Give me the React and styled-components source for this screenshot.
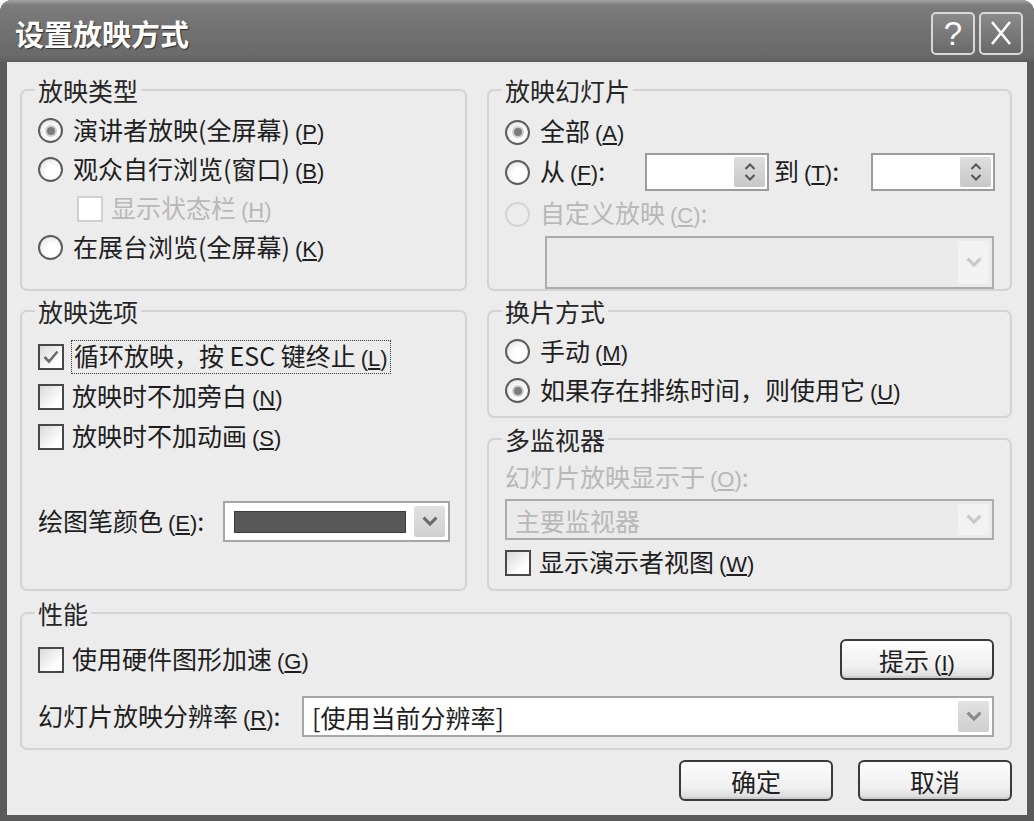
import React from 'react'
import styled, { createGlobalStyle } from 'styled-components'

const GlobalStyle = createGlobalStyle`
  html, body {
    margin: 0;
    padding: 0;
    background: #fff;
  }
  body {
    font-family: "Noto Sans CJK SC", "Noto Sans", sans-serif;
  }
  * {
    box-sizing: border-box;
  }
`

function Chevron({ color = '#666', w = 16 }) {
  return (
    <svg width={w} height={w * 0.65} viewBox="0 0 10 6.5">
      <path d="M1 1 L5 5 L9 1" fill="none" stroke={color} strokeWidth="1.9" />
    </svg>
  )
}

function SpinGlyph({ up }) {
  return (
    <svg width="12" height="7" viewBox="0 0 12 7">
      <path d={up ? 'M1.5 6 L6 1.5 L10.5 6' : 'M1.5 1 L6 5.5 L10.5 1'} fill="none" stroke="#555" strokeWidth="2" />
    </svg>
  )
}

function Tick() {
  return (
    <svg width="18" height="16" viewBox="0 0 18 16">
      <path d="M2.5 8 L7 12.5 L15.5 2.5" fill="none" stroke="#6c6c6c" strokeWidth="2.6" />
    </svg>
  )
}

const Key = ({ k }) => (
  <KeyText>
    (<u>{k}</u>)
  </KeyText>
)

function Spin() {
  return (
    <SpinBox>
      <SpinArrows>
        <SpinGlyph up />
        <SpinGlyph />
      </SpinArrows>
    </SpinBox>
  )
}

export default function App() {
  return (
    <>
      <GlobalStyle />
      <Window>
        <TitleBar>
          <Title>设置放映方式</Title>
          <TitleButton>?</TitleButton>
          <TitleButton>
            <svg width="24" height="26" viewBox="0 0 24 26">
              <path d="M3 2 L21 24 M21 2 L3 24" stroke="#fff" strokeWidth="2.6" />
            </svg>
          </TitleButton>
        </TitleBar>

        <Frame>
          <TopGrid>
            <Group $h={214} $pt={8}>
              <Legend>放映类型</Legend>
              <Row>
                <Radio $checked />
                <Label>演讲者放映(全屏幕)<Key k="P" /></Label>
              </Row>
              <Row>
                <Radio />
                <Label>观众自行浏览(窗口)<Key k="B" /></Label>
              </Row>
              <Row $indent={39}>
                <Check $disabled />
                <Label $disabled>显示状态栏<Key k="H" /></Label>
              </Row>
              <Row>
                <Radio />
                <Label>在展台浏览(全屏幕)<Key k="K" /></Label>
              </Row>
            </Group>

            <Group $h={214} $pt={9}>
              <Legend>放映幻灯片</Legend>
              <Row $h={40}>
                <Radio $checked />
                <Label>全部<Key k="A" /></Label>
              </Row>
              <Row $h={40}>
                <Radio />
                <Label $w={105}>从<Key k="F" />:</Label>
                <Spin />
                <Label $w={97} $ml={5}>到<Key k="T" />:</Label>
                <Spin />
              </Row>
              <Row $h={44}>
                <Radio $disabled />
                <Label $disabled>自定义放映<Key k="C" />:</Label>
              </Row>
              <Select $disabled $ml={40}>
                <SelectValue />
                <ArrowButton $disabled>
                  <Chevron color="#c8c8c8" />
                </ArrowButton>
              </Select>
            </Group>

            <Group $h={293} $pt={13}>
              <Legend>放映选项</Legend>
              <Row $h={40}>
                <Check $checked>
                  <Tick />
                </Check>
                <Label $focus>循环放映，按 ESC 键终止<Key k="L" /></Label>
              </Row>
              <Row $h={40}>
                <Check />
                <Label>放映时不加旁白<Key k="N" /></Label>
              </Row>
              <Row $h={40}>
                <Check />
                <Label>放映时不加动画<Key k="S" /></Label>
              </Row>
              <Row $h={41} $mt={44}>
                <Label $w={185}>绘图笔颜色<Key k="E" />:</Label>
                <Select $w={227}>
                  <Swatch />
                  <ArrowButton>
                    <Chevron color="#6a6a6a" />
                  </ArrowButton>
                </Select>
              </Row>
            </Group>

            <Stack>
              <Group $h={120} $pt={8}>
                <Legend>换片方式</Legend>
                <Row>
                  <Radio />
                  <Label>手动<Key k="M" /></Label>
                </Row>
                <Row>
                  <Radio $checked />
                  <Label>如果存在排练时间，则使用它<Key k="U" /></Label>
                </Row>
              </Group>
              <Group $h={165} $pt={12}>
                <Legend>多监视器</Legend>
                <Row $h={28}>
                  <Label $disabled>幻灯片放映显示于<Key k="O" />:</Label>
                </Row>
                <Select $disabled $mt={7}>
                  <SelectValue $disabled>主要监视器</SelectValue>
                  <ArrowButton $disabled>
                    <Chevron color="#c8c8c8" />
                  </ArrowButton>
                </Select>
                <Row $h={46}>
                  <Check />
                  <Label>显示演示者视图<Key k="W" /></Label>
                </Row>
              </Group>
            </Stack>
          </TopGrid>

          <Group $h={150} $pt={13} $mt={9}>
            <Legend>性能</Legend>
            <Row $h={41} $between>
              <Row $h={41}>
                <Check />
                <Label>使用硬件图形加速<Key k="G" /></Label>
              </Row>
              <Button>提示<Key k="I" /></Button>
            </Row>
            <Row $h={41} $mt={16}>
              <Label $w={264}>幻灯片放映分辨率<Key k="R" />:</Label>
              <Select>
                <SelectValue>[使用当前分辨率]</SelectValue>
                <ArrowButton>
                  <Chevron color="#8a8a8a" />
                </ArrowButton>
              </Select>
            </Row>
          </Group>

          <Footer>
            <Button>确定</Button>
            <Button>取消</Button>
          </Footer>
        </Frame>
      </Window>
    </>
  )
}

const Window = styled.div`
  width: 1034px;
  height: 821px;
  display: flex;
  flex-direction: column;
  background: #5a5a5a;
  border-radius: 12px 12px 0 0;
  overflow: hidden;
  color: #1e1e1e;
`

const TitleBar = styled.div`
  height: 62px;
  flex: none;
  display: flex;
  align-items: center;
  padding: 4px 11px 0 15px;
  background: linear-gradient(#a4a4a4 0, #7c7c7c 5px, #727272 45%, #6a6a6a 90%, #5e5e5e 100%);
`

const Title = styled.div`
  flex: 1;
  font-size: 29px;
  font-weight: bold;
  color: #fff;
  text-shadow: 1px 1px 1px #2e2e2e;
`

const TitleButton = styled.div`
  width: 44px;
  height: 43px;
  border: 2px solid #d8d8d8;
  border-radius: 5px;
  background: linear-gradient(#8a8a8a, #6a6a6a);
  display: flex;
  align-items: center;
  justify-content: center;
  color: #fff;
  font-family: "Liberation Sans", sans-serif;
  font-size: 33px;
  line-height: 1;

  & + & {
    margin-left: 4px;
  }
`

const Frame = styled.div`
  flex: 1;
  margin: 0 7px 6px;
  background: #ececec;
  padding: 15px 15px 0 13px;
  display: flex;
  flex-direction: column;
`

const TopGrid = styled.div`
  display: grid;
  grid-template-columns: 447px 1fr;
  column-gap: 20px;
  row-gap: 7px;
`

const Stack = styled.div`
  display: flex;
  flex-direction: column;
  gap: 8px;
`

const Group = styled.fieldset`
  margin: ${p => p.$mt || 0}px 0 0;
  min-width: 0;
  height: ${p => p.$h}px;
  padding: ${p => p.$pt || 8}px 16px 0;
  border: 2px solid #d3d3d3;
  border-radius: 7px;
  display: flex;
  flex-direction: column;
`

const Legend = styled.legend`
  padding: 0 3px;
  margin-left: -3px;
  font-size: 25px;
  line-height: 26px;
  color: #262626;
`

const Row = styled.div`
  display: flex;
  align-items: center;
  flex: none;
  height: ${p => p.$h || 39}px;
  padding-left: ${p => p.$indent || 0}px;
  margin-top: ${p => p.$mt || 0}px;
  justify-content: ${p => (p.$between ? 'space-between' : 'flex-start')};
`

const Radio = styled.span`
  width: 25px;
  height: 25px;
  flex: none;
  border-radius: 50%;
  margin-right: 10px;
  border: 2px solid ${p => (p.$disabled ? '#d4d4d4' : '#5c5c5c')};
  background: ${p =>
    p.$disabled ? '#ececec' : 'radial-gradient(circle at 60% 65%, #fff 35%, #dcdcdc 100%)'};
  display: flex;
  align-items: center;
  justify-content: center;

  &::after {
    content: '';
    display: ${p => (p.$checked ? 'block' : 'none')};
    width: 8px;
    height: 8px;
    border-radius: 50%;
    background: #7c7c7c;
    box-shadow: 0 0 0 2px #cdcdcd;
  }
`

const Check = styled.span`
  width: 26px;
  height: 26px;
  flex: none;
  margin-right: 8px;
  border: 2px solid ${p => (p.$disabled ? '#d0d0d0' : '#484848')};
  background: ${p => (p.$disabled ? '#fff' : 'linear-gradient(135deg, #d9d9d9, #fff 75%)')};
  display: flex;
  align-items: center;
  justify-content: center;
`

const Label = styled.span`
  font-size: 25px;
  line-height: 28px;
  white-space: nowrap;
  flex: none;
  width: ${p => (p.$w ? `${p.$w}px` : 'auto')};
  color: ${p => (p.$disabled ? '#b8b8b8' : '#1e1e1e')};
  outline: ${p => (p.$focus ? '1px dotted #3a3a3a' : 'none')};
  padding: 0 ${p => (p.$focus ? 2 : 0)}px;
  margin-left: ${p => p.$ml || 0}px;
`

const KeyText = styled.span`
  font-family: "Liberation Sans", sans-serif;
  font-size: 22px;
  margin-left: 5px;

  & u {
    text-underline-offset: 2px;
  }
`

const SpinBox = styled.div`
  width: 124px;
  height: 38px;
  flex: none;
  border: 2px solid #9c9c9c;
  background: #fff;
  display: flex;
  justify-content: flex-end;
  padding: 2px;
`

const SpinArrows = styled.div`
  width: 31px;
  border-radius: 2px;
  background: linear-gradient(#dedede, #c8c8c8);
  display: flex;
  flex-direction: column;
  align-items: center;
  justify-content: center;
  gap: 4px;
`

const Select = styled.div`
  height: 41px;
  flex: ${p => (p.$w ? 'none' : '1 1 auto')};
  width: ${p => (p.$w ? `${p.$w}px` : 'auto')};
  margin-left: ${p => p.$ml || 0}px;
  margin-top: ${p => p.$mt || 0}px;
  border: 2px solid ${p => (p.$disabled ? '#acacac' : '#a6a6a6')};
  background: ${p => (p.$disabled ? '#eaeaea' : '#fff')};
  display: flex;
  align-items: stretch;
  padding: 3px;
`

const SelectValue = styled.div`
  flex: 1;
  display: flex;
  align-items: center;
  padding-left: 5px;
  font-size: 25px;
  white-space: nowrap;
  color: ${p => (p.$disabled ? '#b8b8b8' : '#1e1e1e')};
`

const ArrowButton = styled.div`
  width: 31px;
  flex: none;
  border-radius: 2px;
  background: ${p => (p.$disabled ? '#f2f2f2' : 'linear-gradient(#e2e2e2, #cfcfcf)')};
  display: flex;
  align-items: center;
  justify-content: center;
`

const Swatch = styled.div`
  flex: 1;
  margin: 5px 8px 4px 6px;
  background: #585858;
  border: 1px solid #3c3c3c;
`

const Button = styled.button`
  width: 154px;
  height: 41px;
  flex: none;
  padding: 0;
  border: 2px solid #3a3a3a;
  border-radius: 6px;
  background: linear-gradient(#fdfdfd, #efefef 70%, #d9d9d9);
  box-shadow: inset 0 -2px 0 #cdcdcd;
  font-family: inherit;
  font-size: 25px;
  color: #1e1e1e;
`

const Footer = styled.div`
  display: flex;
  justify-content: flex-end;
  gap: 25px;
  margin-top: 10px;
`
